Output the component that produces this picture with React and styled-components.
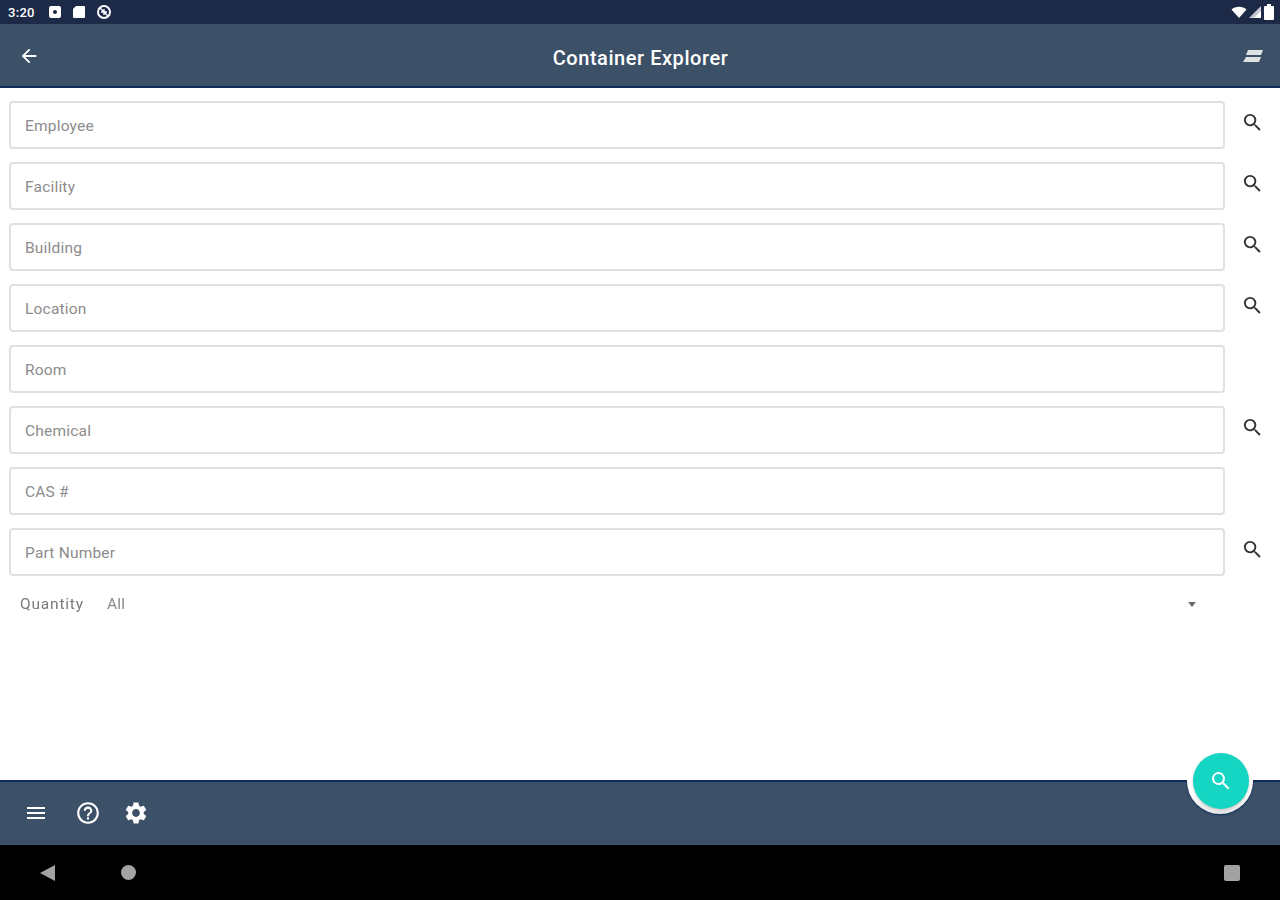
import React from 'react';
import styled, { createGlobalStyle } from 'styled-components';
import { MdArrowBack, MdSearch, MdMenu, MdHelpOutline, MdSettings } from 'react-icons/md';

const GlobalStyle = createGlobalStyle`
  html, body { margin: 0; padding: 0; height: 100%; background: #fff; }
  #root { height: 100%; }
  * { box-sizing: border-box; }
`;

const Page = styled.div`
  width: 1280px;
  height: 900px;
  display: flex;
  flex-direction: column;
  overflow: hidden;
  font-family: Roboto, "Liberation Sans", sans-serif;
  position: relative;
  filter: blur(0.7px);
`;

const StatusBar = styled.div`
  height: 24px;
  background: #1c2947;
  display: flex;
  align-items: center;
  justify-content: space-between;
  padding: 0 5px 0 8px;
  color: #fff;
`;

const StatusGroup = styled.div`
  display: flex;
  align-items: center;
  gap: ${p => p.$gap}px;
`;

const Clock = styled.span`
  font-size: 13px;
  font-weight: 500;
  letter-spacing: 0.3px;
  margin-right: 2px;
  width: 28px;
`;

const AppBar = styled.header`
  height: 64px;
  flex: none;
  background: #3c5068;
  border-bottom: 2px solid #0f2c5c;
  display: grid;
  grid-template-columns: 1fr auto 1fr;
  align-items: center;
  padding: 2px 17px 0 18px;
  color: #fff;
`;

const BackIcon = styled.div`
  font-size: 22px;
  line-height: 0;
`;

const Title = styled.h1`
  margin: 3px 0 0;
  font-size: 20px;
  font-weight: 500;
  letter-spacing: 0.55px;
  color: #fff;
`;

const StackIcon = styled.svg`
  justify-self: end;
`;

const Content = styled.main`
  flex: 1;
  background: #fff;
  padding: 13px 0 0 9px;
  display: flex;
  flex-direction: column;
  gap: 13px;
`;

const Row = styled.div`
  display: flex;
  align-items: center;
  height: 48px;
`;

const Field = styled.div`
  width: 1216px;
  height: 48px;
  border: 2px solid #e0e0e0;
  border-radius: 4px;
  display: flex;
  align-items: center;
  padding: 1px 0 0 14px;
  font-size: 15.5px;
  letter-spacing: 0.2px;
  color: #8c8c8c;
`;

const SearchButton = styled.div`
  width: 55px;
  display: flex;
  justify-content: center;
  margin-top: -6px;
  color: #333;
  font-size: 23px;
  line-height: 0;
`;

const QuantityRow = styled.div`
  display: flex;
  align-items: center;
  width: 1187px;
  height: 30px;
  padding-left: 11px;
  font-size: 15.5px;
  color: #7a7a7a;
  letter-spacing: 0.8px;
`;

const QuantityLabel = styled.span`
  width: 87px;
`;

const QuantityValue = styled.span`
  flex: 1;
  color: #8a8a8a;
  letter-spacing: 0.2px;
`;

const Caret = styled.span`
  width: 0;
  height: 0;
  border-left: 4px solid transparent;
  border-right: 4px solid transparent;
  border-top: 5px solid #6a6a6a;
`;

const BottomBar = styled.footer`
  height: 65px;
  flex: none;
  background: #3c5068;
  border-top: 2px solid #0f2c5c;
  display: flex;
  align-items: center;
  gap: 22px;
  padding: 0 0 2px 21px;
  position: relative;
  color: #fff;
`;

const BarIcon = styled.div`
  width: 30px;
  display: flex;
  justify-content: center;
  font-size: ${p => p.$size || 26}px;
  line-height: 0;
  margin-left: ${p => p.$shift || 0}px;
`;

/* only the part of the cutout inside the bar, so nothing shows on the white page */
const NotchClip = styled.div`
  position: absolute;
  left: 1176px;
  top: -2px;
  width: 90px;
  height: 42px;
  overflow: hidden;

  &::before {
    content: '';
    position: absolute;
    left: 11px;
    top: -32px;
    width: 66px;
    height: 66px;
    border-radius: 50%;
    background: linear-gradient(#fff 70%, #e6e6e6);
    box-shadow: 0 1px 2px #0f2c5c;
  }
`;

const Fab = styled.div`
  position: absolute;
  left: 1193px;
  top: -29px;
  width: 56px;
  height: 56px;
  border-radius: 50%;
  background: #14d6c2;
  box-shadow: 0 1px 3px rgba(0, 0, 0, 0.2);
  display: flex;
  align-items: center;
  justify-content: center;
  color: #fff;
  font-size: 24px;
`;

const NavBar = styled.nav`
  height: 55px;
  flex: none;
  background: #000;
  display: flex;
  align-items: center;
  padding: 0 40px;
`;

const NavBack = styled.span`
  width: 0;
  height: 0;
  border-top: 8px solid transparent;
  border-bottom: 8px solid transparent;
  border-right: 15px solid #a3a3a3;
  margin-right: 66px;
`;

const NavHome = styled.span`
  width: 15px;
  height: 15px;
  border-radius: 50%;
  background: #a3a3a3;
  flex: none;
`;

const NavRecent = styled.span`
  width: 16px;
  height: 16px;
  border-radius: 2px;
  background: #a3a3a3;
  margin-left: auto;
`;

const fields = [
  { label: 'Employee', search: true },
  { label: 'Facility', search: true },
  { label: 'Building', search: true },
  { label: 'Location', search: true },
  { label: 'Room', search: false },
  { label: 'Chemical', search: true },
  { label: 'CAS #', search: false },
  { label: 'Part Number', search: true },
];

const App = () => (
  <Page>
    <GlobalStyle />
    <StatusBar>
      <StatusGroup $gap={10}>
        <Clock>3:20</Clock>
        <svg width="14" height="14" viewBox="0 0 14 14">
          <rect x="1" y="1" width="12" height="12" rx="2" fill="#fff" />
          <circle cx="7" cy="7" r="2" fill="#1c2947" />
        </svg>
        <svg width="14" height="14" viewBox="0 0 14 14">
          <path d="M4 1h8a1 1 0 0 1 1 1v10a1 1 0 0 1-1 1H2a1 1 0 0 1-1-1V4z" fill="#fff" />
        </svg>
        <svg width="16" height="16" viewBox="0 0 16 16">
          <circle cx="8" cy="8" r="6" fill="none" stroke="#fff" strokeWidth="2" />
          <path d="M4 4l8 8M8 5v6M5 8h6" stroke="#fff" strokeWidth="1.4" />
        </svg>
      </StatusGroup>
      <StatusGroup $gap={2}>
        <svg width="16" height="14" viewBox="0 0 16 14">
          <path d="M0.5 4.5C4.5 0.8 11.5 0.8 15.5 4.5L8 13z" fill="#fff" />
        </svg>
        <svg width="12" height="12" viewBox="0 0 12 12">
          <path d="M12 0v12H0z" fill="#fff" opacity="0.75" />
          <path d="M12 5v7H5z" fill="#fff" />
        </svg>
        <svg width="12" height="16" viewBox="0 0 12 16">
          <path d="M4 0h4v2h2a1 1 0 0 1 1 1v12a1 1 0 0 1-1 1H2a1 1 0 0 1-1-1V3a1 1 0 0 1 1-1h2z" fill="#fff" />
        </svg>
      </StatusGroup>
    </StatusBar>

    <AppBar>
      <BackIcon>
        <MdArrowBack />
      </BackIcon>
      <Title>Container Explorer</Title>
      <StackIcon width="20" height="14" viewBox="0 0 20 14">
        <path d="M5 1h15l-2 5H3zM3 8h15l-2 5H0z" fill="#dfe2e5" />
      </StackIcon>
    </AppBar>

    <Content>
      {fields.map(f => (
        <Row key={f.label}>
          <Field>{f.label}</Field>
          {f.search && (
            <SearchButton>
              <MdSearch />
            </SearchButton>
          )}
        </Row>
      ))}
      <QuantityRow>
        <QuantityLabel>Quantity</QuantityLabel>
        <QuantityValue>All</QuantityValue>
        <Caret />
      </QuantityRow>
    </Content>

    <BottomBar>
      <BarIcon $size={24}>
        <MdMenu />
      </BarIcon>
      <BarIcon>
        <MdHelpOutline />
      </BarIcon>
      <BarIcon $shift={-4}>
        <MdSettings />
      </BarIcon>
      <NotchClip />
      <Fab>
        <MdSearch />
      </Fab>
    </BottomBar>

    <NavBar>
      <NavBack />
      <NavHome />
      <NavRecent />
    </NavBar>
  </Page>
);

export default App;
